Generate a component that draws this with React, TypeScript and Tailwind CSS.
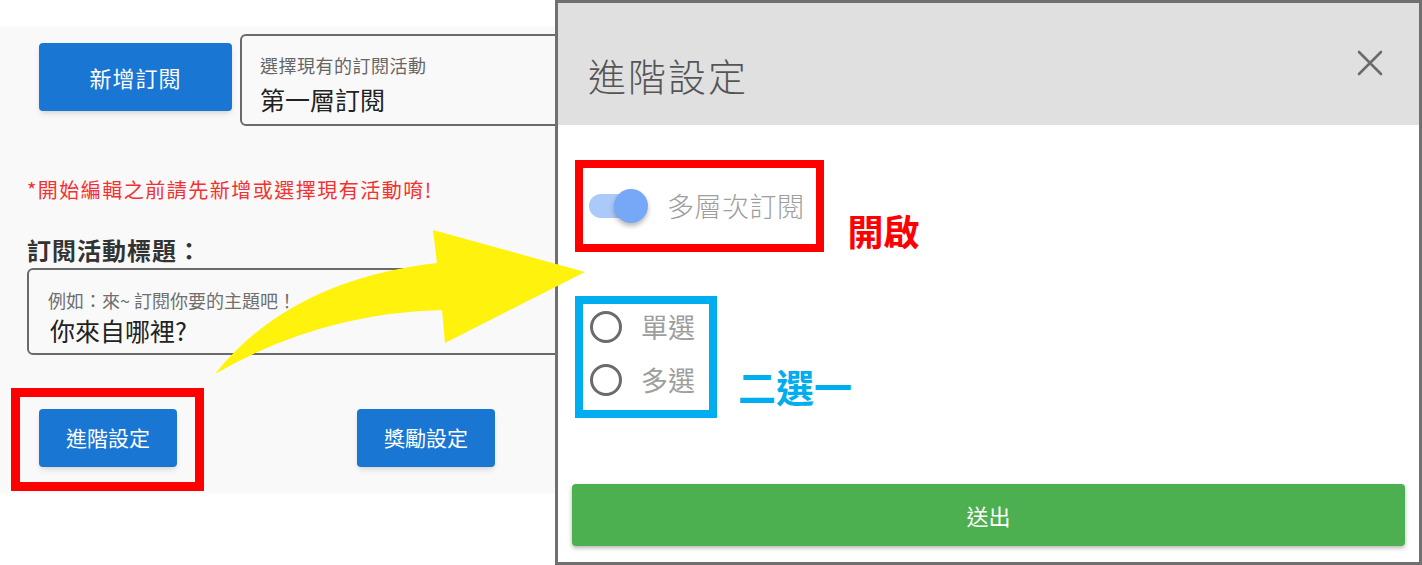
import { useState } from 'react';

const font = { fontFamily: '"Noto Sans CJK TC", "Noto Sans", "Liberation Sans", sans-serif' };

function CloseIcon() {
  return (
    <svg width="26" height="26" viewBox="0 0 26 26" fill="none" stroke="#6b6b6b" strokeWidth="2.6" strokeLinecap="round">
      <path d="M2 2 L24 24 M24 2 L2 24" />
    </svg>
  );
}

function Radio({ label, checked, onClick }: { label: string; checked: boolean; onClick: () => void }) {
  return (
    <button onClick={onClick} className="flex h-[46px] items-center pl-[7px] pr-[14px]">
      <span className="flex h-[32px] w-[32px] items-center justify-center rounded-full border-[3px] border-[#6b6b6b]">
        {checked && <span className="h-[16px] w-[16px] rounded-full bg-[#6b6b6b]" />}
      </span>
      <span className="ml-[19px] text-[27px] leading-[36px] text-[#9e9e9e]">{label}</span>
    </button>
  );
}

export default function App() {
  const [multi, setMulti] = useState(true);
  const [mode, setMode] = useState<'single' | 'multiple' | null>(null);

  return (
    <div className="relative flex h-[565px] w-[1422px] overflow-hidden bg-white" style={font}>
      {/* left page */}
      <div className="w-[555px] shrink-0 pt-[27px]">
        <div className="h-[466px] overflow-hidden bg-[#f9f9f9] pt-[7px]">
          <div className="flex items-start pl-[39px]">
            <button className="mt-[9px] h-[68px] w-[193px] shrink-0 rounded bg-[#1976d2] text-[22px] tracking-[1px] text-white shadow-md">
              新增訂閱
            </button>
            <div className="ml-[8px] h-[92px] w-[320px] shrink-0 rounded-l-[6px] border-2 border-[#6a6a6a] pl-[18px] pt-[18px]">
              <div className="text-[18px] leading-[22px] tracking-[0.5px] text-[#666]">選擇現有的訂閱活動</div>
              <div className="mt-[8px] text-[25px] leading-[30px] text-[#222]">第一層訂閱</div>
            </div>
          </div>

          <p className="mt-[52px] pl-[27px] text-[20px] leading-[24px] tracking-[1.5px] text-[#f53030]">
            *開始編輯之前請先新增或選擇現有活動唷!
          </p>

          <h2 className="mt-[33px] pl-[27px] text-[24px] font-bold leading-[30px] tracking-[1px] text-[#333]">訂閱活動標題：</h2>

          <div className="ml-[27px] mt-[3px] h-[87px] w-[540px] rounded-l-[6px] border-2 border-[#6a6a6a] pl-[19px] pt-[20px]">
            <div className="text-[18px] leading-[20px] text-[#6f6f6f]">例如：來~ 訂閱你要的主題吧！</div>
            <div className="mt-[5px] pl-[2px] text-[25px] leading-[30px] text-[#222]">你來自哪裡?</div>
          </div>

          <div className="mt-[33px] flex items-start pl-[11px]">
            <div className="border-[9px] border-[#ff0000] pb-[15px] pl-[19px] pr-[18px] pt-[12px]">
              <button className="h-[58px] w-[138px] rounded bg-[#1976d2] text-[21px] text-white shadow-md">進階設定</button>
            </div>
            <button className="ml-[153px] mt-[21px] h-[58px] w-[138px] rounded bg-[#1976d2] text-[21px] text-white shadow-md">
              獎勵設定
            </button>
          </div>
        </div>
      </div>

      {/* dialog */}
      <div className="flex h-[565px] w-[867px] shrink-0 flex-col border-[3px] border-[#707070] bg-white">
        <div className="flex h-[122px] items-start justify-between bg-[#e0e0e0] pl-[30px] pr-[36px]">
          <h1 className="pt-[48px] text-[38px] font-light leading-[48px] tracking-[2px] text-[#555]">進階設定</h1>
          <div className="pt-[47px]">
            <CloseIcon />
          </div>
        </div>

        <div className="ml-[17px] mt-[35px] flex items-end">
          <div className="flex h-[92px] items-center border-[8px] border-[#ff0000] pl-[6px] pr-[11px]">
            <button onClick={() => setMulti(!multi)} className="relative h-[34px] w-[59px]">
              <span className={`absolute left-0 top-[5px] h-[24px] w-[52px] rounded-full ${multi ? 'bg-[#abc9f9]' : 'bg-[#c4c4c4]'}`} />
              <span
                className={`absolute top-0 h-[34px] w-[34px] rounded-full shadow-[0_3px_5px_rgba(0,0,0,0.28)] ${
                  multi ? 'right-0 bg-[#76a8f7]' : 'left-0 bg-[#f1f1f1]'
                }`}
              />
            </button>
            <span className="ml-[19px] text-[27px] font-light leading-[36px] tracking-[0.5px] text-[#9e9e9e]">多層次訂閱</span>
          </div>
          <span className="mb-[1px] ml-[24px] text-[36px] font-bold leading-[42px] text-[#ff0000]">開啟</span>
        </div>

        <div className="ml-[17px] mt-[44px] flex items-end">
          <div className="flex flex-col gap-[7px] border-[8px] border-[#00aeef] pb-[7px]">
            <Radio label="單選" checked={mode === 'single'} onClick={() => setMode('single')} />
            <Radio label="多選" checked={mode === 'multiple'} onClick={() => setMode('multiple')} />
          </div>
          <span className="mb-[9px] ml-[21px] text-[38px] font-bold leading-[46px] text-[#00aeef]">二選一</span>
        </div>

        <button className="mx-[14px] mb-[16px] mt-auto h-[62px] rounded bg-[#4caf50] text-[22px] text-white shadow-[0_2px_4px_rgba(0,0,0,0.3)]">
          送出
        </button>
      </div>

      {/* yellow arrow annotation */}
      <svg className="pointer-events-none absolute left-0 top-0" width="1422" height="565" viewBox="0 0 1422 565">
        <path
          d="M215 374 Q290 280 437 263 L433 230 L585 272 L445 343 L442 310 Q320 313 215 374 Z"
          fill="#fff20c"
        />
      </svg>
    </div>
  );
}
